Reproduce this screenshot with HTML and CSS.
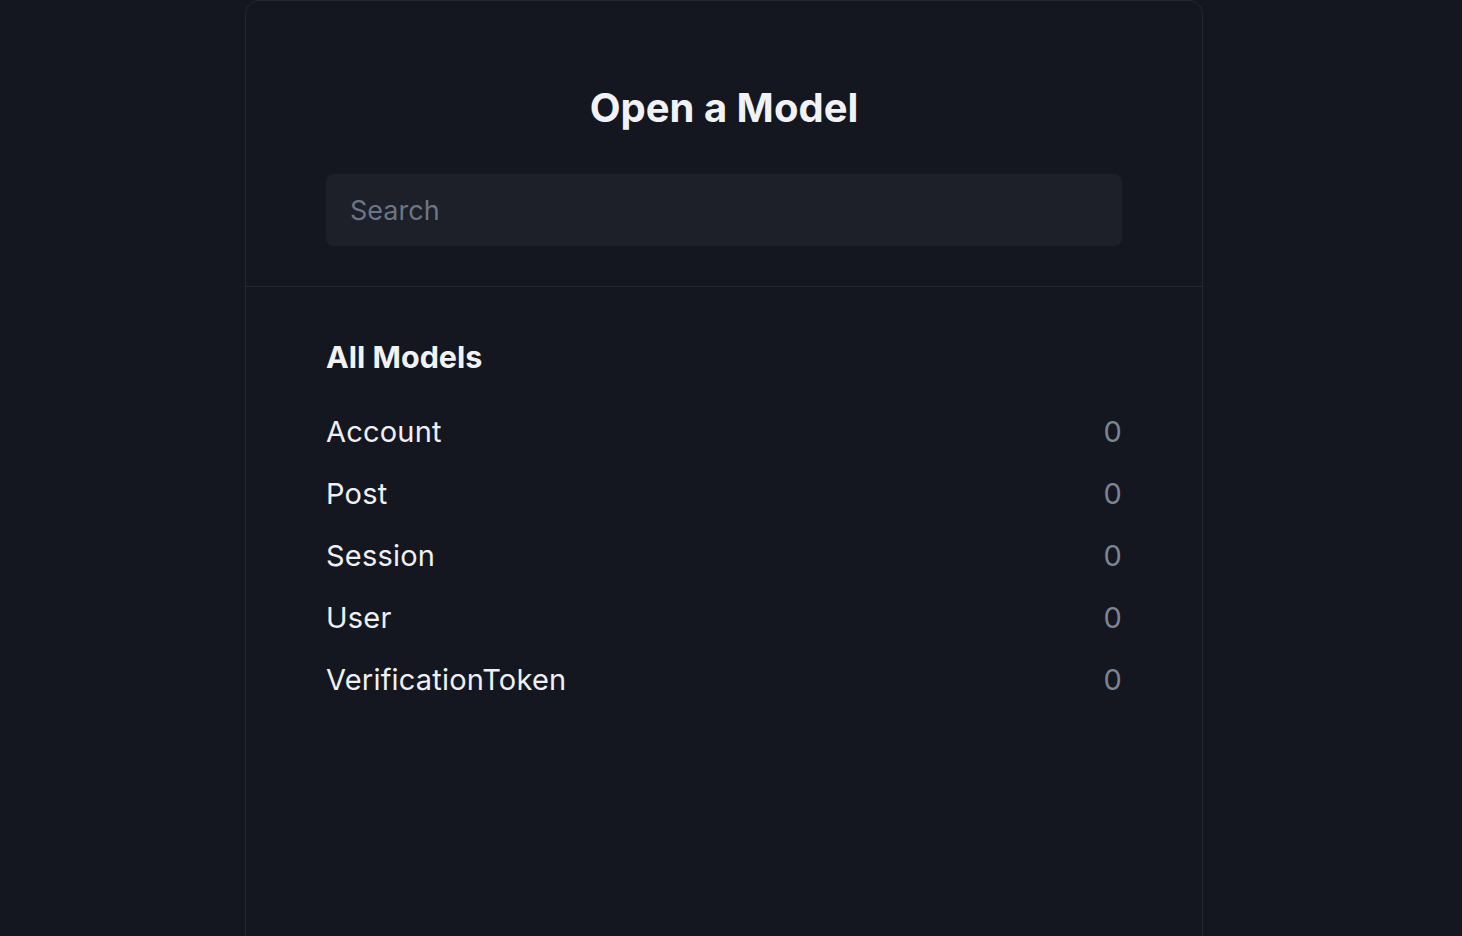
FILE: index.html
```html
<!DOCTYPE html>
<html>
<head>
<meta charset="utf-8">
<link rel="stylesheet" href="styles.css">
</head>
<body>
<div class="card">
  <div class="head">
    <h1 class="title">Open a Model</h1>
    <div class="search">Search</div>
  </div>
  <div class="body">
    <h2 class="section">All Models</h2>
    <ul class="list">
      <li class="row"><span class="name">Account</span><span class="count">0</span></li>
      <li class="row"><span class="name">Post</span><span class="count">0</span></li>
      <li class="row"><span class="name">Session</span><span class="count">0</span></li>
      <li class="row"><span class="name">User</span><span class="count">0</span></li>
      <li class="row"><span class="name">VerificationToken</span><span class="count">0</span></li>
    </ul>
  </div>
</div>
</body>
</html>
```
FILE: styles.css
```css
html, body {
  margin: 0;
  padding: 0;
  background: #141720;
  height: 100%;
  overflow: hidden;
}
body {
  font-family: Inter, "Noto Sans", sans-serif;
  color: #eef0f4;
}
.card {
  box-sizing: border-box;
  width: 958px;
  margin-left: 245px;
  height: 960px;
  border: 1px solid #232732;
  border-radius: 14px;
  background: #141720;
}
.head {
  padding: 83px 80px 40px;
  border-bottom: 1px solid #232732;
}
.title {
  margin: 0 0 42px;
  text-align: center;
  font-size: 40px;
  font-weight: 700;
  line-height: 48px;
  color: #f0f2f6;
}
.search {
  height: 72px;
  border-radius: 8px;
  background: #1d2029;
  padding: 0 24px;
  display: flex;
  align-items: center;
  font-size: 27px;
  color: #6c7585;
}
.body {
  padding: 52px 80px;
}
.section {
  margin: 0 0 25px;
  font-size: 30.5px;
  font-weight: 700;
  line-height: 36px;
  color: #f0f2f6;
}
.list {
  list-style: none;
  margin: 0;
  padding: 0;
}
.row {
  display: flex;
  justify-content: space-between;
  align-items: center;
  height: 62px;
  font-size: 29px;
  letter-spacing: 0.2px;
}
.name {
  color: #eef0f4;
}
.count {
  color: #7b8494;
}
```
